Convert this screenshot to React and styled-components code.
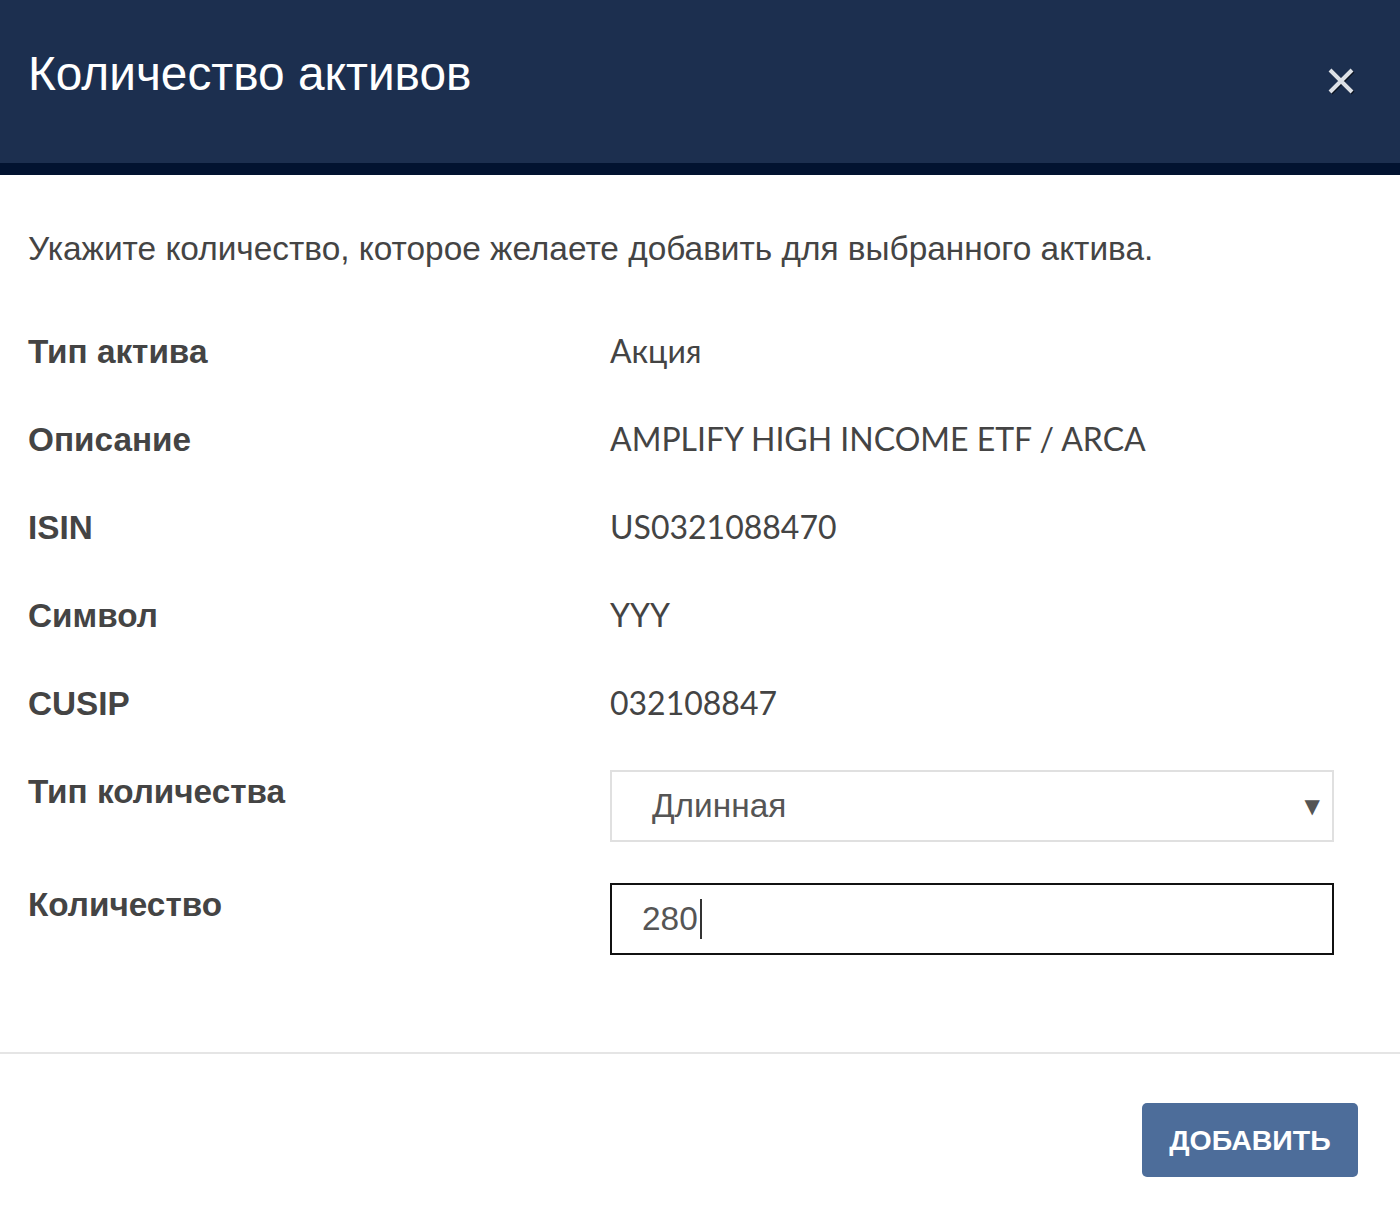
import React from 'react';
import styled, { createGlobalStyle } from 'styled-components';

const GlobalStyle = createGlobalStyle`
  html, body {
    margin: 0;
    padding: 0;
    background: #fff;
  }
  body {
    font-family: "Liberation Sans", Arial, sans-serif;
    color: #444;
  }
  * { box-sizing: border-box; }
`;

const narrow = `"Liberation Sans Narrow", "Arial Narrow", "Liberation Sans", sans-serif`;

const Modal = styled.section`
  width: 1400px;
  min-height: 1212px;
  display: flex;
  flex-direction: column;
  background: #fff;
`;

const Header = styled.header`
  height: 175px;
  background: #1c2f4f;
  border-bottom: 12px solid #021330;
  display: flex;
  align-items: flex-start;
  justify-content: space-between;
  padding: 44px 44px 0 28px;
`;

const Title = styled.h1`
  margin: 0;
  font-family: ${narrow};
  font-weight: 400;
  font-size: 47.8px;
  line-height: 60px;
  color: #fff;
`;

const CloseButton = styled.button`
  margin-top: 22px;
  width: 30px;
  height: 30px;
  padding: 0;
  border: none;
  background: transparent;
  cursor: pointer;
  display: flex;
  filter: drop-shadow(1px 1px 0 rgba(0, 0, 0, 0.6));
`;

const Body = styled.div`
  padding: 52px 28px 0 28px;
`;

const Intro = styled.p`
  margin: 0 0 37px 0;
  font-family: ${narrow};
  font-size: 33.4px;
  line-height: 44px;
  color: #444;
`;

const Grid = styled.div`
  display: grid;
  grid-template-columns: 582px 724px;
  align-items: start;
`;

const Label = styled.div`
  font-weight: 700;
  font-size: 33.3px;
  color: #444;
  display: flex;
  align-items: center;
  height: ${(p) => (p.boxed ? '44px' : '88px')};
  margin-top: ${(p) => p.offset || 0}px;
`;

const Value = styled.div`
  font-family: Lato, "Open Sans", sans-serif;
  font-size: 32px;
  height: 88px;
  padding-bottom: 3px;
  display: flex;
  align-items: center;
  color: #444;
`;

const SelectBox = styled.div`
  height: 72px;
  margin-top: ${(p) => p.offset || 0}px;
  border: 2px solid #e0e0e0;
  display: flex;
  align-items: center;
  justify-content: space-between;
  padding: 0 12px 0 40px;
  font-family: ${narrow};
  font-size: 33.4px;
  color: #555;
`;

const Arrow = styled.span`
  font-family: "DejaVu Sans", sans-serif;
  font-size: 20px;
  color: #555;
`;

const Field = styled.div`
  height: 72px;
  margin-top: ${(p) => p.offset || 0}px;
  border: 2px solid #111;
  display: flex;
  align-items: center;
  padding-left: 30px;
  font-family: ${narrow};
  font-size: 33.4px;
  color: #555;
`;

const Caret = styled.span`
  display: inline-block;
  width: 2px;
  height: 40px;
  background: #333;
  margin-left: 2px;
`;

const Footer = styled.footer`
  margin-top: auto;
  border-top: 2px solid #e5e5e5;
  height: 160px;
  display: flex;
  justify-content: flex-end;
  align-items: flex-start;
  padding: 49px 42px 0 0;
`;

const PrimaryButton = styled.button`
  width: 216px;
  height: 74px;
  border: none;
  border-radius: 5px;
  background: #4d6d9a;
  color: #fff;
  font-family: "Liberation Sans", Arial, sans-serif;
  font-weight: 700;
  font-size: 28.5px;
  cursor: pointer;
`;

const rows = [
  ['Тип актива', 'Акция'],
  ['Описание', 'AMPLIFY HIGH INCOME ETF / ARCA'],
  ['ISIN', 'US0321088470'],
  ['Символ', 'YYY'],
  ['CUSIP', '032108847'],
];

const CloseIcon = () => (
  <svg width="30" height="30" viewBox="0 0 30 30">
    <path d="M4 4 L26 26 M26 4 L4 26" stroke="#dde1e7" strokeWidth="4" />
  </svg>
);

const App = () => (
  <>
    <GlobalStyle />
    <Modal>
      <Header>
        <Title>Количество активов</Title>
        <CloseButton aria-label="Закрыть">
          <CloseIcon />
        </CloseButton>
      </Header>
      <Body>
        <Intro>Укажите количество, которое желаете добавить для выбранного актива.</Intro>
        <Grid>
          {rows.map(([label, value]) => (
            <React.Fragment key={label}>
              <Label>{label}</Label>
              <Value>{value}</Value>
            </React.Fragment>
          ))}
          <Label boxed offset={22}>Тип количества</Label>
          <SelectBox offset={22}>
            <span>Длинная</span>
            <Arrow>▼</Arrow>
          </SelectBox>
          <Label boxed offset={41}>Количество</Label>
          <Field offset={41}>
            280<Caret />
          </Field>
        </Grid>
      </Body>
      <Footer>
        <PrimaryButton>ДОБАВИТЬ</PrimaryButton>
      </Footer>
    </Modal>
  </>
);

export default App;
